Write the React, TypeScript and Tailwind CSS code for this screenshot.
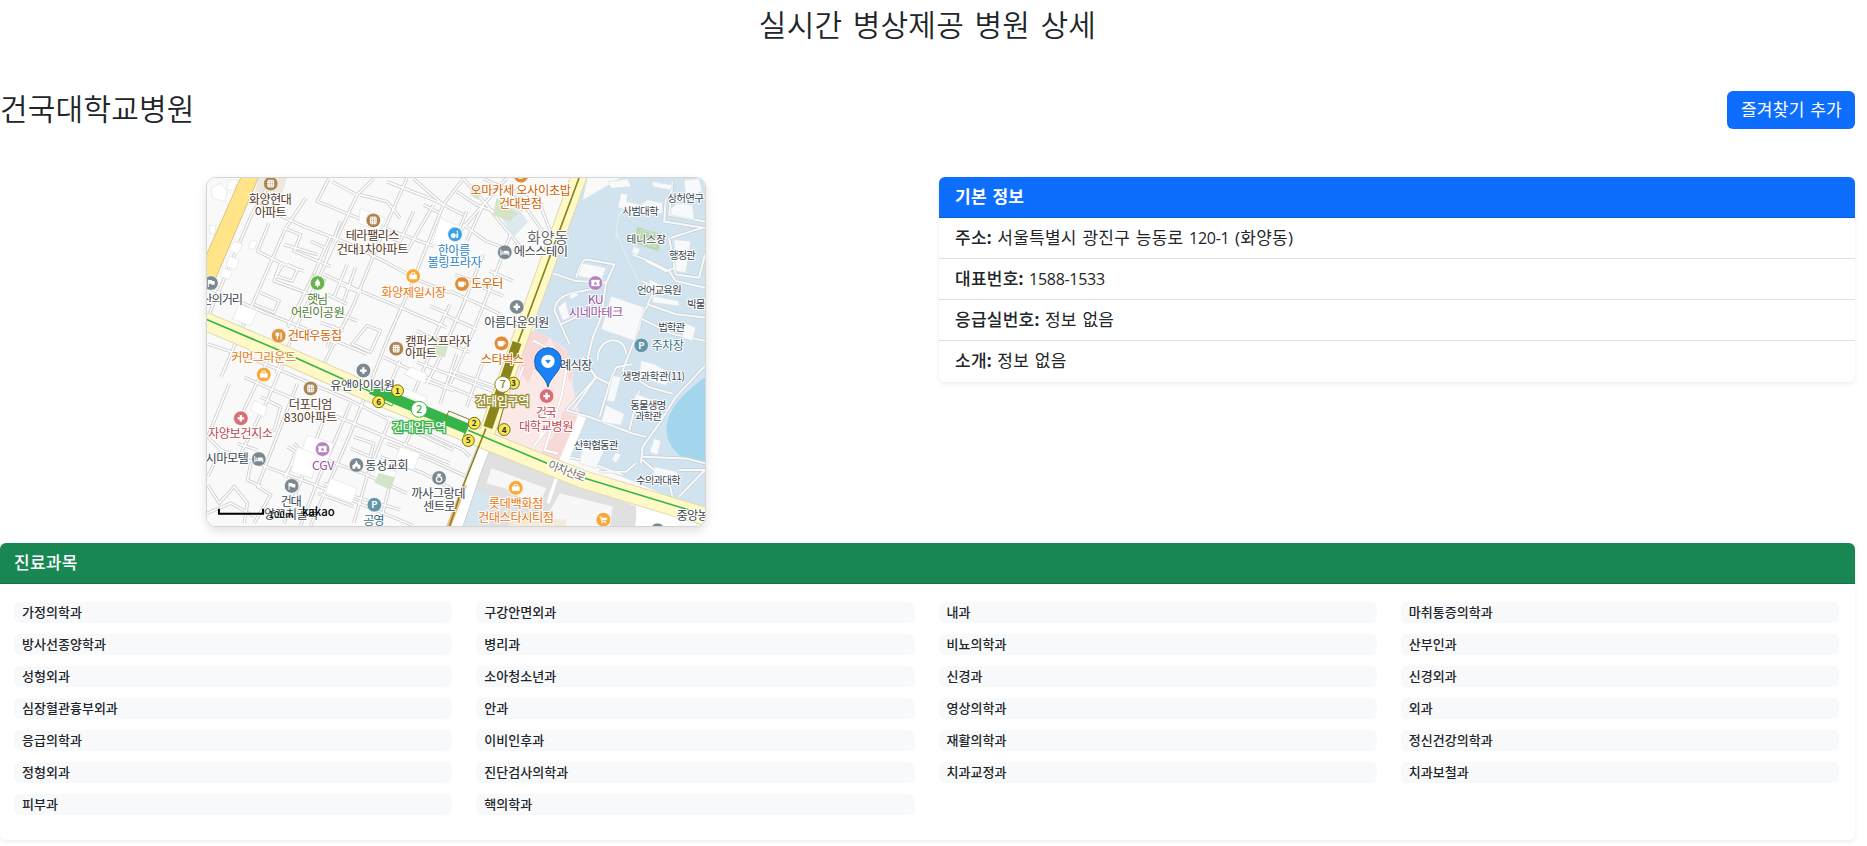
import React from "react";

type Kind =
  | "building" | "tree" | "bag" | "fork" | "bed" | "cup" | "plus" | "parking"
  | "ticket" | "church" | "flag" | "ring" | "cart" | "bowl";

const BROWN = "#54382a";
const ORANGE = "#d06200";
const SLATE = "#3a4650";
const GREEN = "#4e7d33";
const BLUE = "#2a86c8";
const PURPLE = "#97519f";
const RED = "#b84a53";
const TEAL = "#3f7186";

// x, y, kind, fill
const pins: [number, number, Kind, string][] = [
  [210, 36, "building", "#a98553"], [519, 147, "building", "#a98553"], [351, 336, "tree", "#6ab04c"],
  [30, 336, "flag", "#7b8890"], [234, 495, "fork", "#de923f"], [639, 315, "bag", "#f7a835"],
  [588, 534, "building", "#a98553"], [765, 189, "bowl", "#38a3ea"], [964, 12, "cup", "#de8c35"],
  [915, 243, "bed", "#7b8890"], [786, 339, "cup", "#de8c35"], [951, 408, "plus", "#7b8890"],
  [905, 518, "cup", "#de8c35"], [1188, 336, "ticket", "#b584bf"], [1326, 524, "parking", "#6396aa"],
  [189, 612, "bag", "#f7a835"], [489, 600, "plus", "#7b8890"], [330, 654, "building", "#a98553"],
  [120, 744, "plus", "#d86f76"], [366, 837, "ticket", "#b584bf"], [174, 867, "bed", "#7b8890"],
  [468, 885, "church", "#7b8890"], [273, 948, "flag", "#7b8890"], [717, 924, "ring", "#7b8890"],
  [522, 1005, "parking", "#6396aa"], [1041, 677, "plus", "#d86f76"], [948, 954, "bag", "#f7a835"],
  [1212, 1050, "cart", "#f7a835"], [1375, 1082, "flag", "#7b8890"], [1025, 585, "plus", "#7b8890"],
];

// x, baseline, text, colour, rendered width
const labels: [number, number, string, string, number][] = [
  [209, 98, "화양현대", BROWN, 130], [210, 136, "아파트", BROWN, 97],
  [517, 205, "테라팰리스", BROWN, 162], [517, 248, "건대1차아파트", BROWN, 216],
  [351, 399, "햇님", GREEN, 64], [352, 437, "어린이공원", GREEN, 162],
  [64, 398, "산의거리", SLATE, 126], [343, 509, "건대우동집", ORANGE, 164],
  [641, 377, "화양제일시장", "#e87811", 196], [762, 252, "한아름", BLUE, 98], [764, 289, "볼링프라자", BLUE, 164],
  [963, 70, "오마카세 오사이초밥", ORANGE, 304], [962, 110, "건대본점", ORANGE, 131],
  [1024, 254, "에스스테이", SLATE, 164], [862, 351, "도우터", ORANGE, 98],
  [951, 470, "아름다운의원", SLATE, 196], [1189, 398, "KU", PURPLE, 48], [1190, 437, "시네마테크", PURPLE, 164],
  [1406, 537, "주차장", TEAL, 98], [714, 526, "캠퍼스프라자", BROWN, 198], [663, 562, "아파트", BROWN, 97],
  [189, 573, "커먼그라운드", "#e87811", 196], [487, 658, "유앤아이의원", SLATE, 196],
  [330, 716, "더포디엄", BROWN, 131], [330, 755, "830아파트", BROWN, 162],
  [119, 804, "자양보건지소", RED, 196], [368, 899, "CGV", PURPLE, 68], [79, 880, "시마모텔", SLATE, 131],
  [560, 899, "동성교회", SLATE, 131], [272, 1010, "건대", SLATE, 64], [272, 1048, "양꼬치골목", SLATE, 164],
  [521, 1066, "공영", TEAL, 64], [715, 985, "까사그랑데", SLATE, 164], [718, 1024, "센트로", SLATE, 98],
  [908, 580, "스타벅스", ORANGE, 131], [1130, 597, "례식장", SLATE, 98],
  [1040, 740, "건국", RED, 63], [1040, 781, "대학교병원", RED, 164],
  [949, 1016, "롯데백화점", "#e87811", 164], [949, 1056, "건대스타시티점", "#e87811", 229],
  [1497, 1052, "중앙농협", SLATE, 130],
];

const smallLabels: [number, number, string, number][] = [
  [1460, 90, "상허연구", 110], [1324, 130, "사범대학", 110], [1341, 215, "테니스장", 119], [1450, 264, "행정관", 81],
  [1381, 369, "언어교육원", 135], [1505, 410, "박물관", 81], [1418, 482, "법학관", 81],
  [1363, 628, "생명과학관(11)", 191], [1347, 716, "동물생명", 109], [1348, 749, "과학관", 81],
  [1190, 836, "산학협동관", 135], [1378, 941, "수의과대학", 135],
];

const streets = [
  "M215 21L152 130L20 440", "M315 80L255 170L120 480L60 620", "M385 21L350 90L500 150L700 225",
  "M395 30L470 70L520 21", "M470 70L350 330L225 610", "M150 70L210 120L310 165L440 215L560 275L660 330L750 365",
  "M390 195L330 330L260 470", "M620 20L545 190L460 400L360 600", "M560 30L700 85L790 130", "M640 21L730 100L790 21",
  "M730 100L690 200L630 350L560 510L450 790L330 1068", "M205 155L170 240L250 280L310 300", "M250 170L300 190L280 240L390 285",
  "M350 250L250 220M375 230L330 210M420 150L375 270", "M20 350L180 420L330 480L500 550", "M240 275L220 330L330 370",
  "M260 280L290 295L275 330L225 315L250 275", "M180 365L235 390L220 425L160 400", "M370 310L480 360L600 410L740 470",
  "M440 280L400 380M465 290L430 390M380 370L440 400M420 340L480 365", "M500 465L540 480L510 545L455 520Z",
  "M390 420L470 450M360 455L430 480M340 490L410 520M380 530L400 460", "M640 120L600 210L540 190M600 140L560 90L480 70",
  "M670 100L720 125M590 220L620 240L700 100", "M690 405L735 425M670 440L730 465M650 480L700 505L750 400",
  "M790 21L860 100L900 150L980 250M850 21L1030 100", "M770 60L830 100L910 130L960 40M770 190L850 100L920 20",
  "M790 160L860 210L940 240M800 120L760 220M850 100L800 210", "M980 70L920 220L860 380L800 530L750 640",
  "M850 250L790 400L720 560L680 640", "M750 360L860 410L900 430M730 430L830 475M700 500L810 545",
  "M870 300L940 330M850 350L910 375M765 310L850 340", "M930 40L1030 180M1010 70L1060 200",
  "M20 520L140 560L240 600L450 690L570 750L760 840", "M250 570L200 690L120 850M200 570L110 760",
  "M130 620L220 660L400 735L520 785L750 880", "M85 640L20 800L60 840L20 920M60 840L330 940L640 1068",
  "M290 640L170 950L210 975L160 1060", "M380 720L290 960L250 1060", "M450 700L400 820L360 910L300 1068",
  "M260 830L285 845L255 925M280 820L300 840L250 920M380 870L500 915L620 970", "M460 800L520 820L510 860L450 835",
  "M570 745L500 920L460 1060M640 770L580 900L540 1060", "M560 820L690 870L800 920M540 860L670 910L780 970",
  "M370 940L460 980L600 1020M350 970L460 1010", "M20 945L55 1000L100 950L140 1000L130 1060M20 1030L90 1000L160 1040",
  "M150 880L140 930L180 950M110 820L170 840M180 680L240 710L220 780L160 800", "M550 560L700 630L900 710",
  "M600 570L570 640M690 550L640 670M770 550L720 700M850 570L800 710", "M620 610L760 660M650 575L730 605L900 670",
  "M850 650L950 690M750 600L890 650", "M560 740L660 780L790 840L810 860",
];

const campusRoads = [
  "M1055 305L1130 330L1220 335L1245 280L1160 265Q1145 265 1130 320",
  "M1220 335L1205 440L1180 500L1160 580L1190 620L1120 720",
  "M1065 420Q1065 380 1120 365L1200 350M1065 420L1110 520M1085 460L1170 420L1200 420",
  "M1340 270L1400 300L1430 290M1300 250L1350 270L1410 300L1430 330L1518 350",
  "M1330 330L1370 350L1345 400L1430 430L1518 440M1345 405Q1325 430 1320 470L1270 600L1350 650L1420 670",
  "M1320 440L1420 490L1518 510M1410 200L1430 310L1500 320L1518 250",
  "M1400 80L1395 150L1518 170M1420 30L1410 130L1518 150M1510 170L1475 180L1415 200",
  "M1150 560L1190 620L1100 720L1170 740L1300 790L1340 800",
  "M1190 620L1230 640L1250 590L1300 580M1195 570C1190 495 1280 490 1280 550",
  "M1518 585L1430 680L1380 760L1330 830L1325 880M1320 660L1290 780M1240 610L1200 740",
  "M1330 860L1460 865L1518 880M1310 880L1280 905L1200 905M1330 870L1410 940L1420 980M1440 900L1518 900L1440 980",
  "M1100 860L1150 870L1270 915",
];

const buildings = [
  "M30 50L60 35L80 60L70 90L35 80Z", "M85 25L110 25L100 55L75 55Z", "M25 160L45 165L40 190L25 185Z",
  "M100 210L125 220L110 250L85 235Z", "M150 205L170 212L160 235L143 230Z", "M85 255L115 265L105 295L75 285Z",
  "M65 290L95 300L85 325L58 315Z", "M115 400L170 420L150 465L95 445Z", "M480 110L555 140L535 180L475 155Z",
  "M720 140L780 165L780 230L695 220Z", "M635 590L680 610L675 640L610 610Z", "M320 795L400 820L380 880L300 850Z",
  "M290 830L350 855L335 925L270 905Z", "M160 690L200 710L190 740L150 720Z", "M390 925L470 955L455 1000L375 970Z",
  "M580 640L680 680L675 700L570 660Z", "M530 890L590 905L570 940L520 920Z", "M600 830L660 850L640 900L580 880Z",
];

const campusBuildings = [
  "M1145 275L1220 290L1205 330L1135 315Z", "M1235 375L1335 410L1305 510L1205 475Z",
  "M1225 30L1285 21L1295 45L1235 50Z", "M1265 65L1285 68L1282 90L1325 100L1345 85L1390 95L1390 125L1350 130L1300 120L1255 108Z",
  "M1360 30L1420 40L1415 55L1360 45Z", "M1455 25L1500 21L1510 60L1460 75Z", "M1435 95L1480 100L1485 145L1415 130L1415 110Z",
  "M1425 205L1475 210L1460 305L1430 300Z", "M1350 325L1395 345L1390 375L1350 365Z", "M1360 375L1440 390L1440 405L1360 395Z",
  "M1075 410L1098 390L1110 440L1090 450Z", "M1110 370L1130 363L1137 375L1112 385Z", "M1455 455L1490 470L1480 510L1450 500Z",
  "M1240 615L1265 620L1245 695L1222 690Z", "M1220 705L1275 730L1265 765L1205 755Z", "M1310 670L1390 700L1370 730L1300 700Z",
  "M1325 570L1365 580L1415 610L1400 645L1320 620Z", "M1150 820L1215 840L1190 895L1140 880Z", "M1250 845L1265 855L1250 880L1238 868Z",
  "M1365 805L1385 812L1375 855L1352 845Z", "M1365 890L1435 905L1430 945L1360 930Z", "M1303 225L1323 235L1313 252L1298 242Z",
  "M1500 380L1518 385L1518 410L1500 405Z",
];

function Glyph({ kind }: { kind: Kind }) {
  switch (kind) {
    case "building":
      return <path d="M-8 -10H8V10H-8ZM-11 -4H11M-11 4H11M-3 -10V10M3 -10V10" fill="none" strokeWidth="3" />;
    case "tree":
      return <path d="M0 -13L9 0L5 1L9 7H2V13H-2V7H-9L-5 1L-9 0Z" strokeWidth="0" />;
    case "bag":
      return <><path d="M-11 -4H11V9H-11Z" /><path d="M-5 -4V-10H5V-4" fill="none" strokeWidth="3" /></>;
    case "fork":
      return <path d="M-8 -10V-3Q-8 1 -4 1V11M-4 -10V1M0 -10V-3Q0 1 -4 1M7 11V-10" fill="none" strokeWidth="3.5" />;
    case "bed":
      return <><path d="M-12 -9V10M-12 5H12V10M12 5V-1" fill="none" strokeWidth="3" /><path d="M-3 -4H11V3H-3Z" /><circle cx="-7" cy="-1" r="2" /></>;
    case "cup":
      return <><path d="M-11 -7H7V3Q6 9 1 9H-5Q-11 8 -11 3Z" /><path d="M7 -4H11V2H7" fill="none" strokeWidth="2.5" /></>;
    case "plus":
      return <path d="M-10 0H10M0 -10V10" strokeWidth="7" />;
    case "parking":
      return <text y="10" textAnchor="middle" fontSize="28" fontWeight="700" strokeWidth="0">P</text>;
    case "ticket":
      return <><path d="M-12 -9H12V-3Q9 0 12 3V9H-12V3Q-9 0 -12 -3Z" /><path d="M0 -5L2 -1L6 -1L3 2L4 6L0 4L-4 6L-3 2L-6 -1L-2 -1Z" fill="#b584bf" strokeWidth="0" /></>;
    case "church":
      return <path d="M-12 11V1L-5 -3V-7H-2V-13H2V-7H5V-3L12 1V11H3V5H-3V11Z" strokeWidth="0" />;
    case "flag":
      return <><path d="M-8 -10V12" strokeWidth="3" /><path d="M-8 -9H2L4 -6H11V5H2L0 2H-8Z" strokeWidth="0" /></>;
    case "ring":
      return <><circle cy="4" r="8" fill="none" strokeWidth="4" /><path d="M-5 -13H5L7 -9L0 -4L-7 -9Z" strokeWidth="0" /></>;
    case "cart":
      return <><path d="M-12 -9H-8L-5 5H8" fill="none" strokeWidth="3" /><path d="M-8 -6H12L9 2H-6Z" strokeWidth="0" /><circle cx="-4" cy="9" r="2" /><circle cx="6" cy="9" r="2" /></>;
    case "bowl":
      return <><circle cx="-5" cy="4" r="7" /><path d="M7 -12Q11 -9 8 -4Q13 3 9 11H4Q2 2 6 -4Q3 -10 7 -12Z" strokeWidth="0" /></>;
  }
}

function HospitalMap() {
  const exits: [number, number, string][] = [
    [592, 661, "1"], [535, 694, "6"], [941, 638, "3"], [823, 759, "2"], [913, 778, "4"], [805, 811, "5"],
  ];
  return (
    <svg
      viewBox="18 19 1500 1050"
      preserveAspectRatio="none"
      className="block h-full w-full font-['Noto_Sans_CJK_KR',sans-serif]"
      role="img"
    >
      <rect x="10" y="10" width="1520" height="1070" fill="#f9f9f9" />
      <path d="M175 15H260L240 80L160 70Z" fill="#efe8df" />
      <g fill="none" strokeLinejoin="round">
        {streets.map((d) => <path key={d} d={d} stroke="#cdcdcd" strokeWidth="10" />)}
        {streets.map((d) => <path key={d} d={d} stroke="#fdfdfd" strokeWidth="5" />)}
      </g>
      <g fill="#fff" stroke="#e2e2e2" strokeWidth="2">
        {buildings.map((d) => <path key={d} d={d} />)}
      </g>
      <path d="M895 120L950 105L985 150L940 200Z" fill="#dde9ef" />
      <g fill="#d4e4c8">
        <path d="M335 305L380 325L365 350L335 345Z" />
        <path d="M535 908L585 923L570 960L522 938Z" />
        <path d="M705 500L748 510L735 560L695 550Z" />
        <path d="M820 35L850 50L835 85L810 70Z" />
        <path d="M890 80L955 125L930 150L880 130Z" />
      </g>

      <path d="M1150 15H1530V1030L1100 850L960 800L1010 420Z" fill="#d1e3ef" />
      <path d="M1165 15H1270L1150 85Z" fill="#f9f9f9" />
      <path d="M950 460L1045 498L1100 535L1122 590L1118 640L1130 690L1140 730L1080 880L880 790Z" fill="#fbe9e7" />
      <path d="M985 475L1050 500L1020 560L985 640L960 600ZM1050 500L1105 545L1122 600L1112 640L1090 570ZM1090 725L1135 740L1080 875L1020 855L1060 800Z" fill="#f8d9d8" />
      <path d="M1530 612C1450 668 1402 720 1402 778C1404 842 1460 882 1530 882Z" fill="#a3d6ec" />
      <path d="M1314 167L1392 190L1377 240L1305 215Z" fill="#b9d9ad" />
      <path d="M1327 175L1380 192L1368 226L1318 208Z" fill="none" stroke="#d5e8cd" strokeWidth="3" />
      <g fill="none" strokeLinejoin="round">
        {campusRoads.map((d) => <path key={d} d={d} stroke="#c5ced4" strokeWidth="10" />)}
        {campusRoads.map((d) => <path key={d} d={d} stroke="#f7f9fa" strokeWidth="6" />)}
      </g>
      <path d="M1148 738L1085 890" stroke="#fff" strokeWidth="26" />
      <path d="M1250 180Q1290 280 1320 330M1250 200Q1250 110 1300 80" fill="none" stroke="#dfecf4" strokeWidth="4" />
      <g fill="#f8f9fa" stroke="#dce1e5" strokeWidth="2">
        {campusBuildings.map((d) => <path key={d} d={d} />)}
      </g>
      <g fill="none" strokeLinejoin="round">
        <path d="M1000 510L1060 540L1100 600L1085 680L1035 840L1075 850M970 590L930 700M1020 800L1050 730M1000 830L1040 780" stroke="#e2cfd0" strokeWidth="9" />
        <path d="M1000 510L1060 540L1100 600L1085 680L1035 840L1075 850M970 590L930 700M1020 800L1050 730M1000 830L1040 780" stroke="#fff" strokeWidth="6" />
      </g>

      <path d="M840 835L900 850L1310 1010L1310 1080H790L830 950Z" fill="#e0e0e0" />
      <path d="M812 955L870 975L860 1080H775Z" fill="#d7e5ee" />
      <path d="M875 895L1040 955L1020 1000L960 985L950 965L860 940Z" fill="#f7f7f7" />
      <path d="M1080 970L1240 1010L1230 1080H1020Z" fill="#f7f7f7" />
      <path d="M1320 1010L1430 1040V1080H1305Z" fill="#fff" />
      <path d="M930 1040L1100 1050V1080H925Z" fill="#f3ead9" />
      <path d="M1072 920L1045 1000" stroke="#fff" strokeWidth="10" />
      <path d="M860 810L825 900L765 1080" fill="none" stroke="#cfcfcf" strokeWidth="42" />
      <path d="M860 810L825 900L765 1080" fill="none" stroke="#fff" strokeWidth="37" />
      <path d="M795 945L742 1080" stroke="#f3b98a" strokeWidth="14" />

      <path d="M121 15H174L44 322L10 345V265Z" fill="#ffe588" stroke="#ddc37d" strokeWidth="3" />

      <g fill="none">
        <path d="M10 450L240 548L510 667L805 790L1155 930L1475 1027L1530 1043" stroke="#e1d8ae" strokeWidth="57" />
        <path d="M1140 10L955 520L862 785" stroke="#e1d8ae" strokeWidth="50" />
        <path d="M1140 10L955 520L862 785" stroke="#fff9c6" strokeWidth="44" />
        <path d="M10 450L240 548L510 667L805 790L1155 930L1475 1027L1530 1043" stroke="#fff9c6" strokeWidth="51" />
        <path d="M10 443L240 541L510 663" stroke="#35b44a" strokeWidth="5" />
        <path d="M805 780L1042 880M1156 925L1475 1022L1530 1038" stroke="#35b44a" strokeWidth="5" />
        <path d="M512 655L803 776" stroke="#35b44a" strokeWidth="32" />
        <path d="M1140 15L955 515M858 775L788 952L745 1080" stroke="#8b841d" strokeWidth="5" />
        <path d="M952 515L864 772" stroke="#8b841d" strokeWidth="28" />
        <path d="M737 745L746 722L815 750M893 778L912 710" stroke="#8b7d1d" strokeWidth="3" />
        <path d="M550 695L574 707L585 690M790 800L800 775" stroke="#35b44a" strokeWidth="3" />
      </g>

      {pins.map(([x, y, kind, fill]) => (
        <g key={`${x}-${y}`} transform={`translate(${x} ${y})`}>
          <circle r="22" fill={fill} stroke="#fff" strokeWidth="2" />
          <g fill="#fff" stroke="#fff" strokeWidth="1"><Glyph kind={kind} /></g>
        </g>
      ))}

      <g stroke="#fff" strokeWidth="6" strokeLinejoin="round" paintOrder="stroke" textAnchor="middle">
        <text x="1044" y="216" fontSize="45" fill="#666c70" textLength="124">화양동</text>
        {labels.map(([x, y, text, fill, width]) => (
          <text key={`${x}-${y}`} x={x} y={y} fontSize="37" fill={fill} textLength={width}>{text}</text>
        ))}
        {smallLabels.map(([x, y, text, width]) => (
          <text key={text} x={x} y={y} fontSize="32" fill={SLATE} textLength={width}>{text}</text>
        ))}
        <text transform="translate(1098 915) rotate(21)" fontSize="35" fill="#777" textLength="118">아차산로</text>
      </g>

      <g textAnchor="middle" fontWeight="500" fontSize="37" strokeWidth="8" strokeLinejoin="round" paintOrder="stroke" fill="#fff">
        <text x="657" y="784" stroke="#35b44a" textLength="164">건대입구역</text>
        <text x="908" y="707" stroke="#9a9130" textLength="164">건대입구역</text>
      </g>
      {exits.map(([x, y, n]) => (
        <g key={n}>
          <circle cx={x} cy={y} r="18" fill="#f8e84d" stroke="#756d25" strokeWidth="3" />
          <text x={x} y={y + 9} fontSize="25" fontWeight="600" textAnchor="middle" fill="#333">{n}</text>
        </g>
      ))}
      <g textAnchor="middle" fontSize="33" fontWeight="500">
        <circle cx="657" cy="717" r="24" fill="#fff" stroke="#35b44a" strokeWidth="3" />
        <text x="657" y="729" fill="#35b44a">2</text>
        <circle cx="909" cy="642" r="24" fill="#fff" stroke="#8b841d" strokeWidth="3" />
        <text x="909" y="654" fill="#8b841d">7</text>
      </g>

      <path d="M1045 650C1040 620 1005 605 1005 571A40 40 0 0 1 1085 571C1085 605 1050 620 1045 650Z" fill="#1b82f5" stroke="#1260bd" strokeWidth="3" />
      <circle cx="1045" cy="572" r="20" fill="#fff" />
      <path d="M1038 569H1052L1045 578Z" fill="#1b82f5" stroke="#1b82f5" strokeWidth="2" />

      <path d="M54 1017V1032H187V1017" fill="none" stroke="#000" strokeWidth="6" />
      <g fill="#000">
        <text x="203" y="1044" fontSize="27" fontWeight="500" textLength="76">100m</text>
        <text x="304" y="1040" fontSize="34" fontWeight="500" textLength="99">kakao</text>
      </g>
    </svg>
  );
}

const departments = [
  "가정의학과", "구강안면외과", "내과", "마취통증의학과",
  "방사선종양학과", "병리과", "비뇨의학과", "산부인과",
  "성형외과", "소아청소년과", "신경과", "신경외과",
  "심장혈관흉부외과", "안과", "영상의학과", "외과",
  "응급의학과", "이비인후과", "재활의학과", "정신건강의학과",
  "정형외과", "진단검사의학과", "치과교정과", "치과보철과",
  "피부과", "핵의학과",
];

function InfoRow({ label, children }: { label: string; children: React.ReactNode }) {
  return (
    <li className="h-[41px] border-b border-[#dee2e6] px-4 pt-2 leading-6 last:border-b-0">
      <strong className="font-medium">{label}<span className="font-bold tracking-normal">:</span></strong>{" "}
      {children}
    </li>
  );
}

export default function App() {
  return (
    <div className="h-[846px] overflow-hidden bg-white pr-3 font-['Open_Sans','Noto_Sans_CJK_KR',sans-serif] text-[17px] tracking-[0.25px] text-[#212529]">
      <h1 className="h-[91px] pt-[6px] text-center text-[30px] leading-[38px] font-[350] tracking-[0.2px] [word-spacing:2.5px]">
        실시간 병상제공 병원 상세
      </h1>
      <div className="flex h-[38px] items-center justify-between">
        <h2 className="h-10 text-[30px] leading-[38px] font-[350] tracking-[0.2px]">건국대학교병원</h2>
        <button className="h-[38px] w-32 rounded-md bg-[#0d6efd] pl-px text-white [word-spacing:1px]">즐겨찾기 추가</button>
      </div>

      <div className="mt-12 grid grid-cols-[915px_1fr] items-start gap-6">
        <div className="flex justify-center pr-[3px]">
          <div className="h-[350px] w-[500px] overflow-hidden rounded-[10px] border border-[#d5d5d5] shadow-[0_4px_10px_rgba(0,0,0,0.12)]">
            <HospitalMap />
          </div>
        </div>
        <section className="overflow-hidden rounded-md shadow-[0_2px_4px_rgba(0,0,0,0.075)] [word-spacing:1px]">
          <h3 className="h-[41px] border-b border-[#0b5ed7] bg-[#0d6efd] px-4 pt-2 leading-6 font-semibold text-white">
            기본 정보
          </h3>
          <ul>
            <InfoRow label="주소">
              서울특별시 광진구 능동로 <span className="text-base tracking-[-0.3px]">120-1</span> (화양동)
            </InfoRow>
            <InfoRow label="대표번호"><span className="text-base tracking-[-0.3px]">1588-1533</span></InfoRow>
            <InfoRow label="응급실번호">정보 없음</InfoRow>
            <InfoRow label="소개">정보 없음</InfoRow>
          </ul>
        </section>
      </div>

      <section className="mt-4 h-[297px] overflow-hidden rounded-md shadow-[0_2px_4px_rgba(0,0,0,0.075)]">
        <h3 className="h-[41px] border-b border-[#157347] bg-[#198754] px-[14px] pt-2 leading-6 font-medium text-white">
          진료과목
        </h3>
        <ul className="grid grid-cols-4 gap-x-6 gap-y-[11px] pt-[18px] pr-4 pl-[14px] text-[13px] tracking-[0.02px]">
          {departments.map((name) => (
            <li key={name} className="h-[21px] rounded-md bg-[#f8f9fa] px-2 leading-[21px] font-medium">
              {name}
            </li>
          ))}
        </ul>
      </section>
    </div>
  );
}
